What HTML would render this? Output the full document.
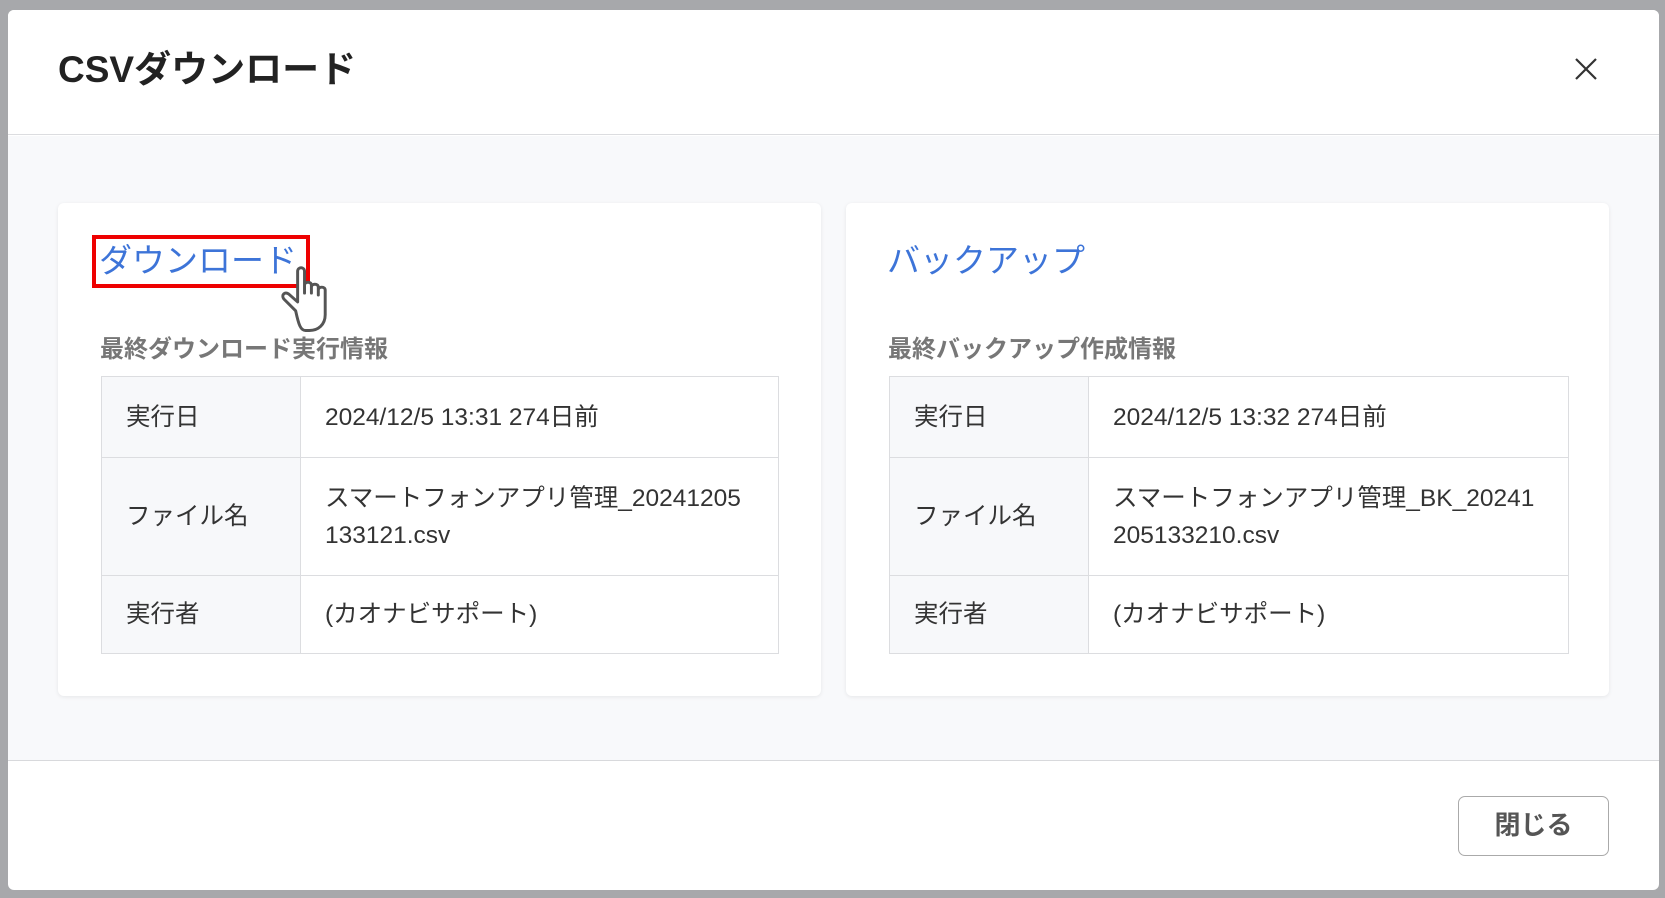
<!DOCTYPE html>
<html><head><meta charset="utf-8"><style>
*{box-sizing:border-box;margin:0;padding:0}
body{width:1665px;height:898px;background:#a7a8ab;position:relative;overflow:hidden;font-family:"Liberation Sans","Noto Sans CJK JP",sans-serif;color:#333}
.modal{position:absolute;left:8px;top:10px;width:1651px;height:880px;background:#fff;border-radius:6px;overflow:hidden}
.hdr{position:absolute;left:0;top:0;width:100%;height:125px;border-bottom:1px solid #dcdde0;background:#fff}
.hdr h1{position:absolute;left:50px;top:40px;font-size:37px;font-weight:bold;color:#222;line-height:40px}
.body{position:absolute;left:0;top:126px;width:100%;height:625px;background:#f8f9fb;border-bottom:1px solid #d8d9dc}
.card{position:absolute;top:67px;width:763px;height:493px;background:#fff;border-radius:6px;box-shadow:0 1px 4px rgba(0,0,0,.08)}
.link{position:absolute;left:41px;top:38px;font-size:33px;color:#3d74d8;line-height:40px;white-space:nowrap}
.sub{position:absolute;left:42px;top:134px;font-size:24px;font-weight:bold;color:#777;line-height:26px;white-space:nowrap}
table{position:absolute;left:43px;top:173px;width:678px;border-collapse:collapse;font-size:24.5px;color:#333}
td{border:1px solid #dcdde0;padding:0 24px;line-height:37px;vertical-align:middle;white-space:nowrap}
td.l{width:199px;background:#f7f8fa}
.btn{position:absolute;left:1450px;top:786px;width:151px;height:60px;border:1.5px solid #aaa;border-radius:7px;background:#fff;font-size:26px;font-weight:bold;color:#555;text-align:center;line-height:57px}
.red{position:absolute;left:92px;top:235px;width:218px;height:53px;border:4px solid #e00}
</style></head><body>
<div class="modal">
 <div class="hdr"><h1>CSVダウンロード</h1>
  <svg style="position:absolute;left:1567px;top:48px" width="22" height="22" viewBox="0 0 22 22"><path d="M1 1L21 21M21 1L1 21" stroke="#333" stroke-width="2.2"/></svg>
 </div>
 <div class="body">
  <div class="card" style="left:50px">
   <div class="link">ダウンロード</div>
   <div class="sub">最終ダウンロード実行情報</div>
   <table>
    <tr style="height:81px"><td class="l">実行日</td><td>2024/12/5 13:31 274日前</td></tr>
    <tr style="height:118px"><td class="l">ファイル名</td><td>スマートフォンアプリ管理_20241205<br>133121.csv</td></tr>
    <tr style="height:78px"><td class="l">実行者</td><td>(カオナビサポート)</td></tr>
   </table>
  </div>
  <div class="card" style="left:838px">
   <div class="link">バックアップ</div>
   <div class="sub">最終バックアップ作成情報</div>
   <table style="width:680px">
    <tr style="height:81px"><td class="l">実行日</td><td>2024/12/5 13:32 274日前</td></tr>
    <tr style="height:118px"><td class="l">ファイル名</td><td>スマートフォンアプリ管理_BK_20241<br>205133210.csv</td></tr>
    <tr style="height:78px"><td class="l">実行者</td><td>(カオナビサポート)</td></tr>
   </table>
  </div>
 </div>
 <div class="btn">閉じる</div>
</div>
<div class="red"></div>
<svg style="position:absolute;left:274px;top:262px" width="64" height="72" viewBox="0 0 65 70">
<path d="M22 48 L10 36 C7 32 11 28 15 31 L24 39 L24 8 C24 3 31 3 31 8 L31 30 L31 22 C31 18 38 18 38 22 L38 30 L38 24 C38 20 45 20 45 24 L45 32 L45 27 C45 23 52 23 52 27 L52 52 C52 62 45 68 36 68 L32 68 C27 68 25 62 22 48 Z" fill="#fff" stroke="#555" stroke-width="3" stroke-linejoin="round"/>
</svg>
</body></html>
